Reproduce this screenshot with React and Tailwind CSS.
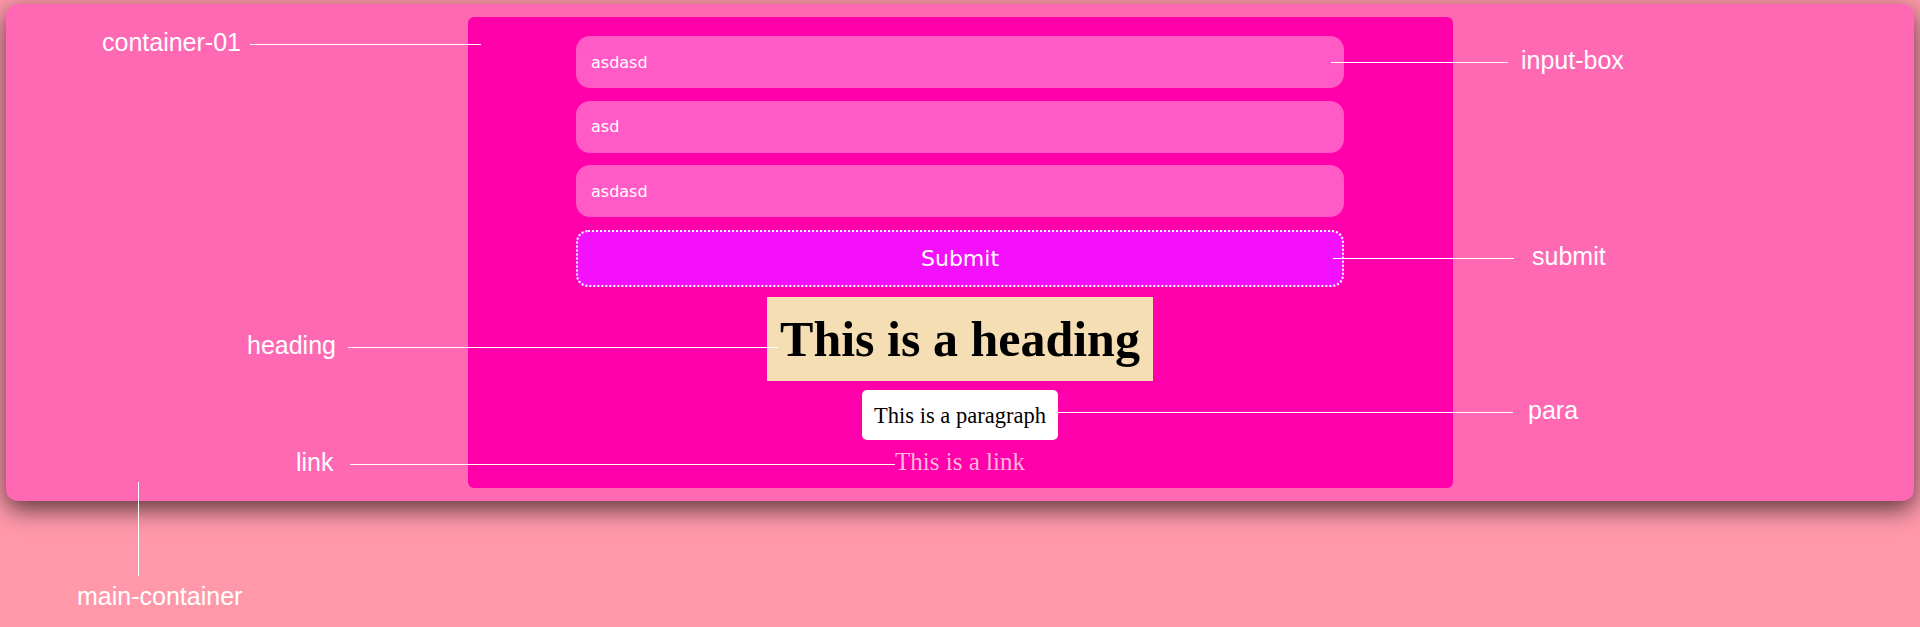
import React from "react";

const labelText =
  "whitespace-nowrap text-[25px] leading-[29px] text-white font-['Liberation_Sans',Arial,sans-serif]";

// annotation: a label with its pointer line, laid over the page
const Note = ({ text, line, gap, side, className }) => (
  <div className={`absolute flex items-center ${className}`} style={{ gap }}>
    {side === "right" && <span className="mt-[4px] h-px bg-white" style={{ width: line }} />}
    <span className={labelText}>{text}</span>
    {side === "left" && <span className="mt-[4px] h-px bg-white" style={{ width: line }} />}
  </div>
);

const inputCls =
  "h-[52px] w-[768px] rounded-[14px] bg-[#ff5ac6] px-[15px] font-['DejaVu_Sans',Verdana,sans-serif] text-[16px] text-white outline-none";

const App = () => {
  return (
    <div className="relative h-[627px] overflow-hidden bg-[#ff99aa] px-[6px] pt-[4px]">
      {/* main-container */}
      <div className="flex h-[497px] justify-center rounded-xl bg-[#ff69b4] py-[13px] shadow-[0_8px_24px_rgba(0,0,0,0.65)]">
        {/* container-01 */}
        <div className="flex w-[985px] flex-col items-center rounded-md bg-[#ff00aa] pt-[19px]">
          <div className="flex flex-col gap-[12.5px]">
            <input defaultValue="asdasd" className={inputCls} />
            <input defaultValue="asd" className={inputCls} />
            <input defaultValue="asdasd" className={inputCls} />
            <button
              type="submit"
              className="h-[57px] w-[768px] rounded-[12px] border-2 border-dotted border-white bg-[#f510fb] font-['DejaVu_Sans',Verdana,sans-serif] text-[22px] text-white"
            >
              Submit
            </button>
          </div>

          <h1 className="mt-[10px] h-[84px] bg-[#f5deb3] px-[13px] font-['Liberation_Serif','Times_New_Roman',serif] text-[50px] font-bold leading-[84px] text-black">
            This is a heading
          </h1>

          <p className="mt-[9px] h-[50px] rounded-[5px] bg-white px-[12px] pt-[13px] font-['Liberation_Serif','Times_New_Roman',serif] text-[22.5px] leading-[26px] text-black">
            This is a paragraph
          </p>

          <a
            href="#"
            className="mt-[7px] font-['Liberation_Serif','Times_New_Roman',serif] text-[25px] leading-[29px] text-[#ffb6da]"
          >
            This is a link
          </a>
        </div>
      </div>

      {/* annotations */}
      <Note text="container-01" side="left" gap={9} line={231} className="left-[102px] top-[28px]" />
      <Note text="input-box" side="right" gap={13} line={177} className="left-[1331px] top-[46px]" />
      <Note text="submit" side="right" gap={18} line={181} className="left-[1333px] top-[242px]" />
      <Note text="heading" side="left" gap={12} line={430} className="left-[247px] top-[331px]" />
      <Note text="para" side="right" gap={15} line={455} className="left-[1058px] top-[396px]" />
      <Note text="link" side="left" gap={16} line={545} className="left-[296px] top-[448px]" />

      <div className="absolute left-[77px] top-[482px] flex flex-col items-start">
        <span className="ml-[61px] h-[94px] w-px bg-white" />
        <span className={`mt-[6px] ${labelText}`}>main-container</span>
      </div>
    </div>
  );
};

export default App;
